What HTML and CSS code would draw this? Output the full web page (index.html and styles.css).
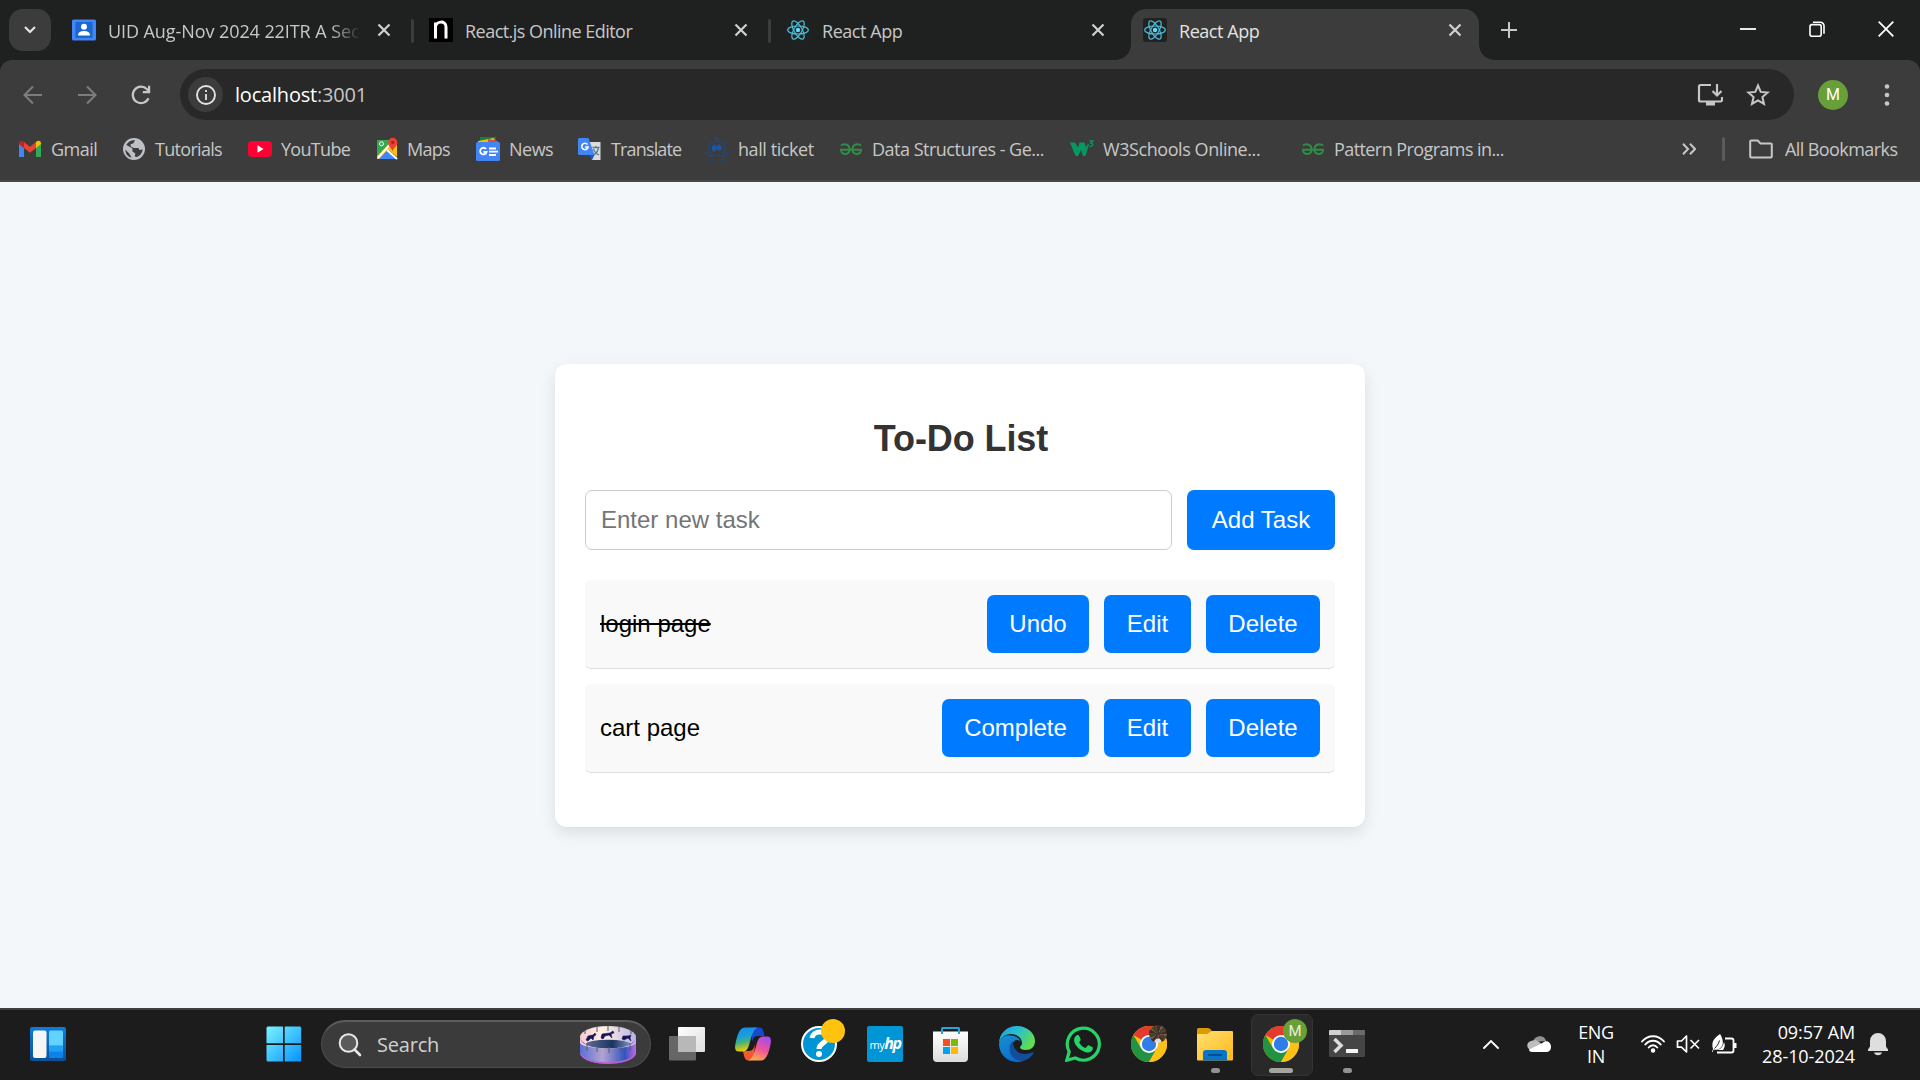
FILE: index.html
```html
<!DOCTYPE html>
<html lang="en">
<head>
<meta charset="utf-8">
<title>React App</title>
<link rel="stylesheet" href="styles.css">
</head>
<body>
<svg class="defs" width="0" height="0">
  <defs>
    <symbol id="x" viewBox="0 0 14 14"><path d="M1.5 1.5l11 11M12.5 1.5l-11 11" fill="none" stroke="currentColor" stroke-width="2.2"/></symbol>
    <symbol id="react" viewBox="0 0 24 24"><rect width="24" height="24" rx="3" fill="#202222"/><g fill="none" stroke="#4fbcd8" stroke-width="1.2"><ellipse cx="12" cy="12" rx="10.3" ry="4"/><ellipse cx="12" cy="12" rx="10.3" ry="4" transform="rotate(60 12 12)"/><ellipse cx="12" cy="12" rx="10.3" ry="4" transform="rotate(120 12 12)"/></g><circle cx="12" cy="12" r="2.2" fill="#61dafb"/></symbol>
    <symbol id="gfg" viewBox="0 0 24 24"><g fill="none" stroke="#2f8d46" stroke-width="2"><path d="M2 8.600C4 6.500 10.500 6.500 10.500 12.200C10.500 18.500 2 18.500 2 12.700H22C22 18.500 13.500 18.500 13.500 12.200C13.500 6.500 20 6.500 22 8.600"/></g></symbol>
    <symbol id="chrome" viewBox="0 0 36 36"><circle cx="18" cy="18" r="18" fill="#fbbc04"/><path d="M18 18L2.400 9A18 18 0 0 1 33.600 9H18z" fill="#e33b2e"/><path d="M2.400 9A18 18 0 0 0 18 36L25.800 22.500L18 18L10.200 22.500z" fill="#229342"/><path d="M33.600 9A18 18 0 0 1 18 36L25.800 22.500A9 9 0 0 0 18 9z" fill="#fbc116"/><circle cx="18" cy="18" r="9" fill="#fff"/><circle cx="18" cy="18" r="7.200" fill="#2f7de9"/></symbol>
  </defs>
</svg>

<header class="browser">
  <div class="tabstrip">
    <div class="tab-search"><svg width="12" height="8" viewBox="0 0 12 8"><path d="M1 1l5 5 5-5" fill="none" stroke="#e3e3e3" stroke-width="2.200"/></svg></div>
    <div class="tabs">
      <div class="tab">
        <svg class="fav" viewBox="0 0 24 24"><rect y="1.500" width="24" height="21" rx="1.500" fill="#4285f4"/><rect x="3.500" y="4" width="17" height="16" fill="#1967d2"/><circle cx="12" cy="8.800" r="3" fill="#fff"/><path d="M6 17.500c0-3.500 3-4.500 6-4.500s6 1 6 4.500z" fill="#fff"/></svg>
        <span class="tab-title t-uid">UID Aug-Nov 2024 22ITR A Sect</span>
        <svg class="close"><use href="#x"/></svg>
      </div>
      <div class="tab">
        <svg class="fav" viewBox="0 0 24 24"><rect width="24" height="24" fill="#000"/><path d="M6.500 20.500V4.500M6.500 9C7 3 17 2 17 9V20.500" fill="none" stroke="#fff" stroke-width="3"/></svg>
        <span class="tab-title t-editor">React.js Online Editor</span>
        <svg class="close"><use href="#x"/></svg>
      </div>
      <div class="tab">
        <svg class="fav"><use href="#react"/></svg>
        <span class="tab-title">React App</span>
        <svg class="close"><use href="#x"/></svg>
      </div>
      <div class="tab active">
        <svg class="fav"><use href="#react"/></svg>
        <span class="tab-title">React App</span>
        <svg class="close"><use href="#x"/></svg>
      </div>
    </div>
    <svg class="new-tab" viewBox="0 0 16 16"><path d="M8 0v16M0 8h16" stroke="#c7c7c7" stroke-width="2"/></svg>
    <div class="window-controls">
      <svg viewBox="0 0 16 16"><path d="M0 8h16" stroke="#fff" stroke-width="1.800"/></svg>
      <svg viewBox="0 0 16 16"><g fill="none" stroke="#fff" stroke-width="1.600"><rect x="1" y="3.600" width="11.200" height="11.600" rx="2"/><path d="M4 1.300h7.500a3.500 3.500 0 0 1 3.500 3.500v8"/></g></svg>
      <svg viewBox="0 0 16 16"><path d="M.7.700l14.600 14.600M15.300.700L.7 15.300" stroke="#fff" stroke-width="1.800"/></svg>
    </div>
  </div>

  <div class="toolbar">
    <div class="nav">
      <svg viewBox="0 0 24 24"><path d="M21 12H4M12 3.500L3.500 12l8.500 8.500" fill="none" stroke="#7d7d7d" stroke-width="2"/></svg>
      <svg viewBox="0 0 24 24"><path d="M3 12h17M12 3.500l8.500 8.500-8.500 8.500" fill="none" stroke="#7d7d7d" stroke-width="2"/></svg>
      <svg viewBox="0 0 24 24"><path d="M19.500 15.200A8.200 8.200 0 1 1 18 6.300l2 2.200" fill="none" stroke="#c7c7c7" stroke-width="2.200"/><path d="M21.200 2.800v7.400h-7.400V8h5.200V2.800z" fill="#c7c7c7"/></svg>
    </div>
    <div class="omnibox">
      <span class="site-info"><svg width="20" height="20" viewBox="0 0 20 20"><circle cx="10" cy="10" r="9" fill="none" stroke="#e3e3e3" stroke-width="1.900"/><path d="M9.100 9h1.800v6H9.100zM9.100 5h1.800v2H9.100z" fill="#e3e3e3"/></svg></span>
      <span class="url"><b>localhost</b>:3001</span>
      <svg class="install" width="26" height="24" viewBox="0 0 26 24"><g fill="none" stroke="#c7c7c7" stroke-width="2.200"><path d="M14 2H3.500A1.500 1.500 0 0 0 2 3.500V17a1.500 1.500 0 0 0 1.500 1.500h20A1.500 1.500 0 0 0 25 17v-3"/><path d="M20 1v11M15.500 8l4.500 4.500L24.500 8"/></g><path d="M9 18h9v4.500H9z" fill="#c7c7c7"/></svg>
      <svg class="star" width="24" height="24" viewBox="0 0 24 24"><path d="M12 2.500l2.700 6.400 7 .6-5.300 4.600 1.600 6.800-6-3.600-6 3.600 1.600-6.800L2.300 9.500l7-.6z" fill="none" stroke="#c7c7c7" stroke-width="2"/></svg>
    </div>
    <span class="avatar">M</span>
    <svg class="menu" width="6" height="22" viewBox="0 0 6 22"><g fill="#c7c7c7"><circle cx="3" cy="2.500" r="2.300"/><circle cx="3" cy="11" r="2.300"/><circle cx="3" cy="19.500" r="2.300"/></g></svg>
  </div>

  <div class="bookmarks">
    <div class="bm-list">
      <a class="bm b-gmail"><svg viewBox="0 0 24 24"><path d="M1 6v14h5V10z" fill="#4285f4"/><path d="M18 10v10h5V6z" fill="#34a853"/><path d="M6 11V5l6 4.800L18 5v6l-6 4.800z" fill="#ea4335"/><path d="M1 6.500C1 3.500 4 3 6 5v6l-5-4z" fill="#c5221f"/><path d="M23 6.500c0-3-3-3.500-5-1.500v6l5-4z" fill="#fbbc04"/></svg><span>Gmail</span></a>
      <a class="bm b-tut"><svg viewBox="0 0 24 24"><circle cx="12" cy="12" r="11" fill="#bdc1c6"/><path d="M4.300 8C6 4.500 10 2.700 13 3.300l-1.500 3 -3 1 .5 2.500 3 1.200h4.500l1 2 3.300-.5c-1 4-3 6.500-6 7.500l-2-.5.500-3-2.800-2-.2-3.200-4-2.300zM3.200 12.500l4 4 2.500 4C6 20 3.500 17 3.200 12.500z" fill="#3c3c3c"/></svg><span>Tutorials</span></a>
      <a class="bm b-yt"><svg viewBox="0 0 24 24"><rect y="4" width="24" height="16" rx="4" fill="#f03"/><path d="M9.500 8.300v7.400l6-3.700z" fill="#fff"/></svg><span>YouTube</span></a>
      <a class="bm b-maps"><svg viewBox="0 0 24 24"><path d="M2 3h16v19H2z" fill="#34a853"/><path d="M2 19L17 4l5 2v14l-8-7-8 9H2z" fill="#fbc116"/><path d="M4 22l8.500-9L21 22z" fill="#4285f4"/><path d="M3 21L17 5M12 13l10 9" stroke="#fff" stroke-width="2"/><circle cx="6.500" cy="6.800" r="2" fill="none" stroke="#fff"/><path d="M17.500 15c0-4-4.500-5-4.500-9.500a4.700 4.700 0 0 1 9.400 0C22.400 10 17.500 11 17.500 15z" fill="#ea4335"/><circle cx="17.700" cy="5.500" r="1.700" fill="#a52714"/></svg><span>Maps</span></a>
      <a class="bm b-news"><svg viewBox="0 0 24 24"><path d="M4 0h16v6H4z" fill="#188038"/><path d="M2 4l16-3 1 5H2z" fill="#fbbc04"/><path d="M12 2l10 2v3H12z" fill="#ea4335"/><rect y="5" width="24" height="19" rx="1.500" fill="#4285f4"/><path d="M10 12a3.300 3.300 0 1 0 .6 3H7.500M13 11.500h7M13 14.700h9M13 18h7" fill="none" stroke="#fff" stroke-width="1.800"/></svg><span>News</span></a>
      <a class="bm b-trans"><svg viewBox="0 0 24 24"><path d="M9 5h13.500v18H14z" fill="#dadce0"/><path d="M1.500 1h9l6 17h-15A1.500 1.500 0 0 1 0 16.500v-14A1.500 1.500 0 0 1 1.500 1z" fill="#4285f4"/><path d="M11 18h5.500L14 23z" fill="#1a55c4"/><path d="M9.500 7.500a3.200 3.200 0 1 0 .6 2.500H7" fill="none" stroke="#fff" stroke-width="1.600"/><path d="M14.500 10.500h7M18 9v1.500M20.500 11c-1 4-3 6-5 7M15.500 12c1 3 3 5 5.500 6" fill="none" stroke="#607d8b" stroke-width="1.300"/></svg><span>Translate</span></a>
      <a class="bm b-hall"><svg viewBox="0 0 24 24"><g fill="none" stroke="#1d4a85" stroke-width="1.200"><path d="M12 0v3M10 2h4M6 17C1 11 5 4 12 4s11 7 6 13"/><path d="M.5 15l3.500 4.500 4-2M23.500 15L20 19.500l-4-2M6 19.500c4-2 8-2 12 0M4.500 23H10M14 23h5.500" stroke-dasharray="4 1"/></g><path d="M7 9l3-2 1 3 3-3 3 3-2 4-3-2-3 3-2-2z" fill="#1a56a8"/></svg><span>hall ticket</span></a>
      <a class="bm b-data"><svg><use href="#gfg"/></svg><span>Data Structures - Ge...</span></a>
      <a class="bm b-w3"><svg viewBox="0 0 24 24"><path d="M0 5.500h5l3 5 1.500-5h5l1.500 5 2-4 1 1-3.500 11.500h-2.500L11 13l-3 6H5.500z" fill="#059862"/><path d="M19.500 4h3.300l-2 2.200c3 .2 2.600 3.900-1.500 3" fill="none" stroke="#059862" stroke-width="1.300"/></svg><span>W3Schools Online...</span></a>
      <a class="bm b-pat"><svg><use href="#gfg"/></svg><span>Pattern Programs in...</span></a>
    </div>
    <svg class="more" width="14" height="12" viewBox="0 0 14 12"><path d="M1 .8L6 6l-5 5.200M8 .8L13 6l-5 5.200" fill="none" stroke="#c7c7c7" stroke-width="2"/></svg>
    <i class="bm-sep"></i>
    <a class="bm b-all"><svg viewBox="0 0 24 24"><path d="M1.200 19V4.500a1 1 0 0 1 1-1h6.500l2.800 3h10.300a1 1 0 0 1 1 1V19.500a1 1 0 0 1-1 1H2.200a1 1 0 0 1-1-1z" fill="none" stroke="#c7c7c7" stroke-width="2"/></svg><span>All Bookmarks</span></a>
  </div>
</header>

<main class="page">
  <section class="card">
    <h2>To-Do List</h2>
    <div class="entry">
      <input type="text" placeholder="Enter new task">
      <button class="add">Add Task</button>
    </div>
    <ul>
      <li><span class="done">login page</span><div class="actions"><button class="w-undo">Undo</button><button class="w-edit">Edit</button><button class="w-delete">Delete</button></div></li>
      <li><span>cart page</span><div class="actions"><button class="w-complete">Complete</button><button class="w-edit">Edit</button><button class="w-delete">Delete</button></div></li>
    </ul>
  </section>
</main>

<footer class="taskbar">
  <svg class="widgets" width="36" height="34" viewBox="0 0 36 34"><defs><linearGradient id="wg" y2="1" x2="0"><stop stop-color="#0f7bdb"/><stop offset="1" stop-color="#0b4f95"/></linearGradient></defs><rect width="36" height="34" rx="2" fill="url(#wg)"/><rect x="3" y="3.500" width="13.500" height="27.500" rx="2" fill="#f5f5f5"/><rect x="19" y="3.500" width="14" height="27.500" rx="1.500" fill="#0a84e8"/><path d="M19 18.500h14v6H19z" fill="#1ea0f5"/><path d="M19 5q0-1.500 1.500-1.500h11q1.500 0 1.500 1.500v13.500H19z" fill="#62d3ff"/></svg>
  <svg class="start" width="36" height="36" viewBox="0 0 36 36"><defs><linearGradient id="sg" x2="1" y2="1"><stop stop-color="#7af3ff"/><stop offset="1" stop-color="#0593ff"/></linearGradient></defs><path d="M2 .5h15v16.800H.5V2A1.500 1.500 0 0 1 2 .5zM18.700.500h15A1.500 1.500 0 0 1 35.200 2v15.300H18.700zM.5 19H17v16.500H2A1.500 1.500 0 0 1 .5 34zM18.700 19h16.500v15a1.500 1.500 0 0 1-1.500 1.500h-15z" fill="url(#sg)"/></svg>
  <div class="search">
    <svg width="24" height="24" viewBox="0 0 24 24"><circle cx="10.500" cy="10" r="8.800" fill="#5a5a5a" stroke="#e8e8e8" stroke-width="2"/><path d="M16.500 16.500l5.500 5.500" stroke="#e8e8e8" stroke-width="2.600" stroke-linecap="round"/></svg>
    <span>Search</span>
    <svg class="carousel" width="56" height="38" viewBox="0 0 56 38"><defs><linearGradient id="cg" x2="1"><stop stop-color="#5a6ed8"/><stop offset=".4" stop-color="#b3a3d0"/><stop offset=".8" stop-color="#3553bd"/><stop offset="1" stop-color="#bd6be8"/></linearGradient><linearGradient id="ci" x2="1"><stop stop-color="#5d6c98"/><stop offset=".6" stop-color="#1b3560"/><stop offset="1" stop-color="#768fc0"/></linearGradient><linearGradient id="ct" x2="1"><stop stop-color="#f7cbd1"/><stop offset=".4" stop-color="#fff0e2"/><stop offset="1" stop-color="#b9b4e2"/></linearGradient></defs><path d="M0 11v17c4 13 52 13 56 0V11z" fill="url(#cg)"/><path d="M1 28c5 12 49 12 54 0" fill="none" stroke="#c05ddb" stroke-width="1.500"/><ellipse cx="28" cy="11" rx="28" ry="11" fill="url(#ct)"/><path d="M0 11c1 5 3 7 7 8 6-7 36-7 42 0 4-1 6-3 7-8v6c-3 7-53 7-56 0z" fill="url(#ct)"/><ellipse cx="28" cy="18" rx="22" ry="4.200" fill="url(#ci)"/><path d="M5 4v4M17 1v5M28 0v5M39 1v5M51 4v4M7 17v8M17 20v6M29 21v6M41 20v6M50 17v8" stroke="#555a70"/><path d="M6 14l2-4 5-1 2-2 1 2-2 1-1 4-2-2-3 3zM21 12l1-4 8-1 3-2 1 2-3 1 1 4-3-3-4 1-2 3zM42 13l1-3 5 0 3-1-1 3 1 3-3-3-4 2z" fill="#16145a" stroke="#16145a" stroke-width=".6"/></svg>
  </div>
  <div class="apps">
    <div class="app"><svg viewBox="0 0 36 36"><defs><linearGradient id="tv" x2="1" y2="1"><stop stop-color="#fff"/><stop offset="1" stop-color="#ddd"/></linearGradient></defs><rect x="9" y="1" width="27" height="25" rx="1" fill="url(#tv)"/><rect y="10" width="27" height="24.500" rx="1" fill="#666"/><path d="M9 10h18v16H9z" fill="#b8b8b8"/></svg></div>
    <div class="app"><svg viewBox="0 0 36 36"><defs><linearGradient id="cp1" x2=".2" y2="1"><stop stop-color="#1c86e8"/><stop offset=".4" stop-color="#169fe0"/><stop offset=".65" stop-color="#44b17c"/><stop offset="1" stop-color="#f0cd00"/></linearGradient><linearGradient id="cp2" x1=".7" x2=".3" y2="1"><stop stop-color="#a64bf0"/><stop offset=".5" stop-color="#ed5595"/><stop offset="1" stop-color="#ffab50"/></linearGradient></defs><path d="M17 1.500h8c2.500 0 3.500 3 4.500 8.500h-6.500c-4 0-5 2-6 6z" fill="#1748ce"/><path d="M8 25h6c4 0 5-3 6-7l-1 12c-1 4-3 4.500-6 4.500-3 0-4-4-5-9.500z" fill="#f4582f"/><path d="M10 1.500h13c-5 1.500-6.500 9-8.500 16-1.500 5.500-3 8-7 8H4c-4 0-4.500-3-3.500-8C2 11 4 1.500 10 1.500z" fill="url(#cp1)"/><path d="M26 34.500H13c5-1.500 6.500-9 8.500-16 1.500-5.500 3-8 7-8H32c4 0 4.500 3 3.500 8C34 25 32 34.500 26 34.500z" fill="url(#cp2)"/></svg></div>
    <div class="app"><svg viewBox="0 0 36 36"><circle cx="18" cy="18" r="17" fill="#0096d6" stroke="#fff" stroke-width="2"/><path d="M11 12c1-8 15-8 15 0 0 5-8 5-8 11" fill="none" stroke="#fff" stroke-width="5"/><circle cx="18" cy="28" r="3" fill="#fff"/></svg><i class="badge-dot"></i></div>
    <div class="app"><span class="myhp">my<b>hp</b></span></div>
    <div class="app"><svg viewBox="0 0 36 36"><defs><linearGradient id="st" x2="0" y2="1"><stop stop-color="#fff"/><stop offset="1" stop-color="#dcdcdc"/></linearGradient></defs><path d="M0 5.500h35V32a4 4 0 0 1-4 4H4a4 4 0 0 1-4-4z" fill="url(#st)"/><path d="M9 8V2.500A.5.500 0 0 1 9.500 2h16a.5.500 0 0 1 .5.500V8" fill="none" stroke="#22a5e0" stroke-width="2"/><path d="M10 13h7v7h-7z" fill="#f25022"/><path d="M18 13h7v7h-7z" fill="#7fba00"/><path d="M10 21h7v7h-7z" fill="#00a4ef"/><path d="M18 21h7v7h-7z" fill="#ffb900"/></svg></div>
    <div class="app"><svg viewBox="0 0 36 36"><defs><linearGradient id="eg" x2="1" y2=".5"><stop stop-color="#1b9de2"/><stop offset=".5" stop-color="#27bfd0"/><stop offset="1" stop-color="#62dc52"/></linearGradient><linearGradient id="eb" x2=".6" y2="1"><stop stop-color="#1a90cf"/><stop offset="1" stop-color="#0a6ccc"/></linearGradient></defs><path d="M0 18C0 7 8 0 18 0s18 7 18 15c0 6-4 9-9 9-4 0-6-1-6-3 0-1 2-1 2-4 0-5-5-9-11-9C6 8 1 12 0 18z" fill="url(#eg)"/><path d="M0 18c1-6 6-10 12-8.500 5 .5 9 3 10 7-2-3-5-3-7-1-5 5-2 17 9 19.500A18 18 0 0 1 0 18z" fill="url(#eb)"/><path d="M14 15c-5 4-6 17 8 20.500 5-.5 10-4 12.500-8 .5-1-.5-1.500-1.500-1-8 3.500-19 1-19-11.500z" fill="#114f9b"/></svg></div>
    <div class="app"><svg viewBox="0 0 36 36"><path d="M1.800 34.200l2.400-8.500A16 16 0 1 1 10.300 32z" fill="none" stroke="#25d366" stroke-width="3.200"/><path d="M11.500 9.500c1-.8 2.300-.6 2.700.4l1.400 3.300c.3.800-.2 1.500-1.500 3 1.500 3 3.700 4.800 6.500 5.800l2-2.300c.5-.6 1-.6 1.500-.3l3.200 1.600c.9.500.7 1.500.3 2.600-1 2.400-3.800 3.400-6.600 2.600C15 24.500 11.500 21 9.500 16.500c-1-2.700-.2-5.500 2-7z" fill="#25d366"/></svg></div>
    <div class="app"><svg><use href="#chrome"/></svg><i class="photo"></i></div>
    <div class="app running"><svg viewBox="0 0 36 36"><defs><linearGradient id="fg" x2="1" y2="1"><stop stop-color="#ffdf73"/><stop offset="1" stop-color="#ffba16"/></linearGradient></defs><path d="M0 3.500A1.500 1.500 0 0 1 1.500 2H11q2 0 4 3v5H0z" fill="#dc9a05"/><path d="M0 8h10l5-3h20q1 0 1 1v27.500a1 1 0 0 1-1 1H1a1 1 0 0 1-1-1z" fill="url(#fg)"/><path d="M6 34.500V27q0-3 3-3h18q3 0 3 3v7.500z" fill="#0875c9"/><path d="M11 29h14" stroke="#064b86" stroke-width="1.800"/></svg></div>
    <div class="app running current"><svg><use href="#chrome"/></svg><i class="badge-m">M</i></div>
    <div class="app running"><svg viewBox="0 0 36 36"><rect y="4" width="36" height="27" rx="1.500" fill="#454545"/><path d="M1 4h11v5H0V5q0-1 1-1z" fill="#d0d0d0"/><path d="M12 4h12v5H12z" fill="#9a9a9a"/><path d="M24 4h11q1 0 1 1v4H24z" fill="#6a6a6a"/><path d="M5.500 13l6.500 6.500-6.500 6.500" fill="none" stroke="#ddd" stroke-width="3.500"/><rect x="17" y="23" width="12" height="4" rx=".5" fill="#f5f5f5"/></svg></div>
  </div>
  <div class="tray">
    <svg class="chev" width="16" height="10" viewBox="0 0 16 10"><path d="M1 9l7-7 7 7" fill="none" stroke="#fff" stroke-width="1.900" stroke-linecap="round"/></svg>
    <svg class="cloud" width="24" height="16" viewBox="0 0 24 16"><path d="M6 6c1-7 12-8 13-1z" fill="#929292"/><path d="M4 14C-1 13-1 6 4 5c6-2 8 1 13 5z" fill="#bdbdbd"/><path d="M2 13.500L16 6.800C18 4 24 5 24 11c0 3-2 5-5 5H5c-2 0-3-1-3-2.500z" fill="#fff"/></svg>
    <div class="lang"><span>ENG</span><span>IN</span></div>
    <svg class="wifi" width="24" height="18" viewBox="0 0 24 18"><g fill="none" stroke="#fff" stroke-width="1.900" stroke-linecap="round"><path d="M1 6.500C7-.500 17-.500 23 6.500M4.300 9.500C8.500 4.500 15.500 4.500 19.700 9.500M7.700 12.500c2.400-3 6.200-3 8.600 0"/></g><circle cx="12" cy="15.500" r="2.200" fill="#fff"/></svg>
    <svg class="sound" width="24" height="18" viewBox="0 0 24 18"><path d="M1.500 6h4L10.500 1v16L5.500 12.200h-4z" fill="none" stroke="#fff" stroke-width="1.700" stroke-linejoin="round"/><path d="M14.500 5l8.500 8.500M23 5l-8.500 8.500" stroke="#fff" stroke-width="1.600"/></svg>
    <svg class="battery" width="25" height="20" viewBox="0 0 25 20"><path d="M13 4.500h6.500a2 2 0 0 1 2 2v10a2 2 0 0 1-2 2H5" fill="none" stroke="#fff" stroke-width="1.800"/><path d="M22 9h2.500v5H22z" fill="#fff"/><path d="M1 15C-1 8 2 4 8 0c2 3 3.500 7 2.500 11-1.500 4-5 5.500-9 4.500L.8 18H0z" fill="#fff"/><path d="M2.500 14.500C5 12 6.500 10 7.500 6.500" stroke="#1c1c1c" fill="none"/><path d="M12 8c1.500 3 .5 6-1 8H4c4 0 7-3 8-8z" fill="#fff"/></svg>
    <div class="clock"><span class="time">09:57 AM</span><span class="date">28-10-2024</span></div>
    <svg class="bell" width="20" height="24" viewBox="0 0 20 24"><path d="M0 17.500l2-3V9a8 8 0 0 1 16 0v5.500l2 3v1.500H0z" fill="#dedede"/><path d="M6 20.500h8c-1 3.500-7 3.500-8 0z" fill="#dedede"/></svg>
  </div>
</footer>
</body>
</html>
```
FILE: styles.css
```css
* { box-sizing: border-box; }
body {
  margin: 0;
  width: 1920px;
  height: 1080px;
  overflow: hidden;
  display: flex;
  flex-direction: column;
  background: #f4f7fa;
  font-family: "Open Sans", "Noto Sans", sans-serif;
}
.defs { position: absolute; }
svg { display: block; flex: none; }

/* browser frame */
.browser {
  height: 182px;
  flex: none;
  background: #1f2120;
  color: #c7c7c7;
  font-size: 18px;
  white-space: nowrap;
}
.tabstrip { display: flex; height: 60px; padding-left: 9px; }
.tab-search {
  width: 42px;
  height: 42px;
  margin: 9px 9px 0 0;
  border-radius: 14px;
  background: #3c3c3c;
  display: flex;
  align-items: center;
  justify-content: center;
}
.tabs { display: flex; gap: 9px; margin-top: 9px; }
.tab {
  position: relative;
  width: 348px;
  height: 51px;
  padding: 0 17px 9px 12px;
  display: flex;
  align-items: center;
}
.fav { width: 24px; height: 24px; margin-right: 12px; }
.tab-title { flex: 1; overflow: hidden; letter-spacing: -0.45px; padding-top: 2px; }
.t-editor { letter-spacing: -0.53px; }
.t-uid {
  letter-spacing: -0.08px;
  -webkit-mask-image: linear-gradient(90deg, #000 222px, transparent 253px);
  mask-image: linear-gradient(90deg, #000 222px, transparent 253px);
}
.close { width: 14px; height: 14px; margin-left: 12px; color: #d0d0d0; }
.tab:nth-child(1)::after, .tab:nth-child(2)::after {
  content: "";
  position: absolute;
  left: 351px;
  top: 10px;
  width: 3px;
  height: 24px;
  border-radius: 2px;
  background: #3c3c3c;
}
.tab.active { background: #3c3c3c; border-radius: 15px 15px 0 0; color: #e3e3e3; }
.tab.active::before, .tab.active::after {
  content: "";
  position: absolute;
  bottom: 0;
  width: 15px;
  height: 15px;
}
.tab.active::before { left: -15px; background: radial-gradient(circle at 0 0, transparent 14.5px, #3c3c3c 15px); }
.tab.active::after { right: -15px; background: radial-gradient(circle at 100% 0, transparent 14.5px, #3c3c3c 15px); }
.new-tab { width: 16px; height: 16px; margin: 22px 0 0 22px; }
.window-controls { display: flex; gap: 53px; margin: 21px 26px 0 auto; }
.window-controls svg { width: 16px; height: 16px; }

.toolbar {
  height: 60px;
  display: flex;
  align-items: center;
  padding: 9px 30px 0 21px;
  background: #3c3c3c;
  border-radius: 12px 12px 0 0;
}
.nav { display: flex; gap: 30px; }
.nav svg { width: 24px; height: 24px; }
.omnibox {
  width: 1614px;
  height: 51px;
  margin-left: 27px;
  padding: 0 24px 0 8px;
  border-radius: 26px;
  background: #282828;
  display: flex;
  align-items: center;
}
.site-info {
  width: 35px;
  height: 35px;
  border-radius: 50%;
  background: #3c3c3c;
  display: flex;
  align-items: center;
  justify-content: center;
  margin-right: 12px;
}
.url { flex: 1; font-size: 20px; letter-spacing: -0.2px; }
.url b { font-weight: 400; color: #fff; }
.install { margin-right: 23px; }
.avatar {
  width: 30px;
  height: 30px;
  margin: 0 36px 0 24px;
  border-radius: 50%;
  background: #689f38;
  color: #fff;
  font: 16px/30px Roboto, sans-serif;
  text-align: center;
}
.menu { margin-left: 0; }

.bookmarks {
  height: 62px;
  padding: 0 21px 2px 18px;
  display: flex;
  align-items: center;
  background: #3c3c3c;
  border-bottom: 2px solid #474747;
}
.bm-list {
  display: grid;
  grid-template-columns: 104px 126px 127px 101px 102px 127px 134px 231px 231px 220px;
}
.bm { display: flex; align-items: center; gap: 9px; letter-spacing: -0.5px; }
.bm svg { width: 24px; height: 24px; }
.b-yt, .b-maps, .b-tut { letter-spacing: -0.7px; }
.b-maps { gap: 8px; }
.b-trans { letter-spacing: -0.85px; }
.b-pat, .b-all { letter-spacing: -0.58px; }
.b-hall, .b-w3 { letter-spacing: -0.43px; }
.more { margin-left: 161px; }
.bm-sep { width: 3px; height: 24px; margin: 0 24px 0 26px; background: #5c5c5c; border-radius: 2px; }
.b-all { gap: 12px; }

/* to-do page */
.page { height: 826px; padding-top: 182px; display: flex; justify-content: center; align-items: flex-start; }
.card {
  width: 810px;
  height: 463px;
  padding: 54px 30px 0;
  border-radius: 12px;
  background: #fff;
  box-shadow: 0 6px 15px rgba(0, 0, 0, 0.1);
  font: 24px/27px "Liberation Sans", Arial, sans-serif;
}
.card h2 { margin: 0 0 31px; padding-left: 2px; font-size: 36px; line-height: 41px; letter-spacing: -0.1px; text-align: center; color: #333; }
.entry { display: flex; gap: 15px; height: 60px; margin-bottom: 30px; }
.entry input {
  width: 587px;
  padding: 0 15px 2px;
  border: 1px solid #ccc;
  border-radius: 7px;
  background: #fff;
  font: inherit;
}
.entry input::placeholder { color: #757575; }
.card button {
  padding: 0 0 2px;
  border: 0;
  border-radius: 7px;
  background: #007bff;
  color: #fff;
  font: inherit;
  height: 58px;
}
.card .add { width: 148px; height: 60px; }
.card ul { margin: 0; padding: 0; list-style: none; }
.card li {
  height: 89px;
  margin-bottom: 15px;
  padding: 0 15px;
  display: flex;
  align-items: center;
  justify-content: space-between;
  background: #f9f9f9;
  border-bottom: 1px solid #ddd;
  border-radius: 6px;
}
.card li > span { padding-bottom: 2px; }
.done { text-decoration: line-through; }
.actions { display: flex; gap: 15px; }
.w-undo { width: 102px; }
.w-edit { width: 87px; }
.w-delete { width: 114px; }
.w-complete { width: 147px; }

/* taskbar */
.taskbar {
  height: 72px;
  flex: none;
  display: flex;
  align-items: center;
  padding: 0 0 2px 30px;
  border-top: 2px solid #404040;
  background: #1c1c1c;
  color: #fff;
  white-space: nowrap;
}
.widgets { margin-right: 200px; }
.start { margin-right: 19px; }
.search {
  width: 330px;
  height: 48px;
  display: flex;
  align-items: center;
  padding: 0 14px 0 16px;
  border: 1px solid #4c4c4c;
  border-top: 2px solid #5c5c5c;
  border-radius: 24px;
  background: #3b3b3b;
  color: #d0d0d0;
  font-size: 20px;
}
.search span { margin-left: 15px; flex: 1; letter-spacing: -0.2px; }
.apps { display: flex; margin-left: 3px; }
.app { position: relative; width: 66px; height: 60px; display: flex; align-items: center; justify-content: center; }
.app > svg { position: relative; width: 36px; height: 36px; }
.badge-dot { position: absolute; left: 35px; top: 5px; width: 24px; height: 24px; border-radius: 50%; background: #ffc20e; }
.myhp {
  width: 36px;
  height: 36px;
  border-radius: 2px;
  background: #0096d6;
  font: 11px/34px "Open Sans", sans-serif;
  text-align: center;
  letter-spacing: -0.5px;
}
.myhp b { font-size: 16px; font-style: italic; letter-spacing: -1.5px; }
.photo {
  position: absolute;
  left: 33px;
  top: 11px;
  width: 18px;
  height: 18px;
  border-radius: 50%;
  background: radial-gradient(circle at 50% 95%, #ddd 0 3px, transparent 4px), repeating-conic-gradient(#402c26 0 20deg, #74594a 20deg 35deg, #3a4529 35deg 60deg, #7c2d35 60deg 70deg);
}
.running::after {
  content: "";
  position: absolute;
  left: 29px;
  bottom: 1px;
  width: 9px;
  height: 5px;
  border-radius: 3px;
  background: #929292;
}
.current::before {
  content: "";
  position: absolute;
  left: 3px;
  top: 0;
  width: 60px;
  height: 60px;
  border: 1px solid #343434;
  border-radius: 7px;
  background: #292929;
}
.current::after { left: 21px; width: 24px; background: #a5a5a0; }
.badge-m {
  position: absolute;
  left: 35px;
  top: 5px;
  width: 24px;
  height: 24px;
  border-radius: 50%;
  background: #689f38;
  color: #e8eedf;
  font: 15px/24px Roboto, sans-serif;
  text-align: center;
}
.tray { display: flex; align-items: center; margin-left: 103px; font-size: 18px; line-height: 24px; }
.cloud { margin-left: 28px; }
.lang { width: 42px; margin-left: 24px; display: flex; flex-direction: column; align-items: center; letter-spacing: -0.4px; }
.wifi { margin-left: 24px; }
.sound { margin-left: 11px; }
.battery { margin-left: 12px; }
.clock { width: 100px; margin-left: 18px; display: flex; flex-direction: column; align-items: flex-end; letter-spacing: -0.1px; }
.bell { margin-left: 13px; }
```
